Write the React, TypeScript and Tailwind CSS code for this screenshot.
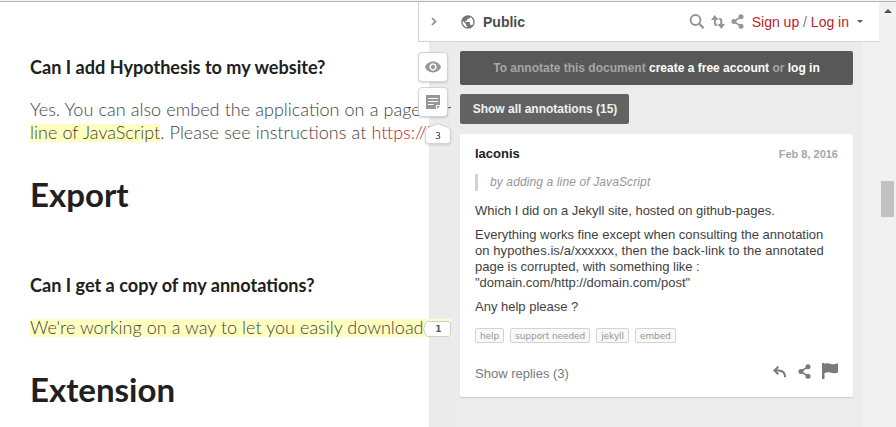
import React from "react";

const Chevron = () => (
  <svg width="6" height="9" viewBox="0 0 6 9" fill="none" stroke="#8b8b8b" strokeWidth="1.7">
    <path d="M1 1l3.5 3.5L1 8" />
  </svg>
);

const Globe = () => (
  <svg width="14" height="14" viewBox="1.500 1.500 21 21" fill="#757575">
    <path d="M12 2C6.48 2 2 6.48 2 12s4.48 10 10 10 10-4.48 10-10S17.52 2 12 2zm-1 17.93c-3.95-.49-7-3.85-7-7.93 0-.62.08-1.21.21-1.79L9 15v1c0 1.100.9 2 2 2v1.930zm6.900-2.540c-.26-.81-1-1.390-1.900-1.390h-1v-3c0-.55-.45-1-1-1H8v-2h2c.55 0 1-.45 1-1V7h2c1.100 0 2-.9 2-2v-.41c2.930 1.190 5 4.060 5 7.410 0 2.080-.8 3.970-2.100 5.390z" />
  </svg>
);

const Search = () => (
  <svg width="16" height="16" viewBox="0 0 16 16" fill="none" stroke="#969696">
    <circle cx="6.500" cy="6" r="4.900" strokeWidth="2" />
    <path d="M10 9.500l4.600 4.600" strokeWidth="2.300" />
  </svg>
);

const Sort = () => (
  <svg width="14" height="14" viewBox="0 0 14 14" fill="#969696">
    <path d="M3.700 0L7.600 5H5V8.500L7 11H5.500Q3 11 3 8.500V5H0z" />
    <path d="M10.300 14L14 9H11.300V5.500Q11.300 3 8.800 3H7.200L9.200 5.500V9H6.600z" />
  </svg>
);

const Share = ({ color }: { color: string }) => (
  <svg width="13" height="15" viewBox="0 0 13 15" fill={color}>
    <path d="M10.200 2.600L2.800 7.500l7.400 4.900" fill="none" stroke={color} strokeWidth="1.700" />
    <circle cx="10" cy="2.700" r="2.500" />
    <circle cx="2.900" cy="7.500" r="2.500" />
    <circle cx="10" cy="12.300" r="2.500" />
  </svg>
);

const Eye = () => (
  <svg width="16" height="12" viewBox="1 4 22 16" fill="#969696">
    <path d="M12 4.500C7 4.500 2.730 7.610 1 12c1.730 4.390 6 7.500 11 7.500s9.270-3.110 11-7.500c-1.730-4.390-6-7.500-11-7.500zM12 17c-2.760 0-5-2.240-5-5s2.240-5 5-5 5 2.240 5 5-2.240 5-5 5zm0-8c-1.660 0-3 1.340-3 3s1.340 3 3 3 3-1.340 3-3-1.340-3-3-3z" />
  </svg>
);

const Note = () => (
  <svg width="14" height="14" viewBox="0 0 14 14">
    <path d="M0 0h14v10h-4V14H0z" fill="#969696" />
    <path d="M11 11H14L11 14z" fill="#969696" />
    <path d="M2 3.500h10M2 6.500h10M2 9.500h5.500" stroke="#fff" strokeWidth="1.200" />
  </svg>
);

const Reply = () => (
  <svg width="14" height="12" viewBox="0 0 14 12" fill="none" stroke="#7a7a7a" strokeWidth="2">
    <path d="M5.300 .8L1.500 4.500 5.300 8.200" />
    <path d="M1.500 4.500H5.500Q12 4.800 12.200 11.300" />
  </svg>
);

const Flag = () => (
  <svg width="16" height="16" viewBox="0 0 16 16" fill="#7a7a7a">
    <path d="M0 0h2v.7C5-.1 7 .2 9 .9c2 .6 4 .4 7-.7v9.200c-3 1.200-5 1-7 .4-2-.6-4-.6-6.500.2V16H0z" />
  </svg>
);

const Question = ({ children }: { children: React.ReactNode }) => (
  <h3 className="h-[24px] whitespace-nowrap text-[18.1px] font-bold leading-[24px] text-[#202020]">{children}</h3>
);

const Tag = ({ children }: { children: React.ReactNode }) => (
  <span className="flex h-[15px] items-center rounded-[2px] border border-[#d3d3d3] bg-[#f9f9f9] px-[4px] font-['DejaVu_Sans',sans-serif] text-[9px] tracking-[-0.08px] text-[#969696]">
    {children}
  </span>
);

const toolButton =
  "flex h-[30px] w-[30px] items-center justify-center rounded-[4px] border border-[#d3d3d3] bg-white shadow-[0_1px_2px_rgba(0,0,0,0.15)]";

export default function App() {
  return (
    <div className="flex h-[427px] w-[896px] flex-col overflow-hidden bg-white font-['Liberation_Sans',Arial,sans-serif]">
      <div className="h-[2px] shrink-0 border-b border-[#b5b5b5] bg-[#f2f2f2]" />
      <div className="flex min-h-0 flex-1">
        <main className="relative w-[451px] shrink-0">
          <div className="absolute inset-y-0 right-0 w-[22px] bg-[#ebebeb]" />
          <article className="relative h-full overflow-hidden pl-[30px] pt-[53px] font-[Lato,sans-serif]">
            <Question>Can I add Hypothesis to my website?</Question>
            <p className="mt-[19px] whitespace-nowrap text-[18px] font-light leading-[23px] text-[#3f3f3f] [word-spacing:0.3px]">
              Yes. You can also embed the application on a page <span className="ml-[3px]">for</span>
              <br />
              <span className="bg-[linear-gradient(#ffffc0,#ffffc0)] bg-[length:100%_18px] bg-[position:0_3px] bg-no-repeat">line of JavaScript</span>. Please see instructions at <span className="text-[#bd1c2b]">https://h</span>
            </p>
            <h1 className="mt-[30px] text-[33px] font-bold leading-[40px] text-[#202020]">Export</h1>
            <div className="mt-[59px]">
              <Question>Can I get a copy of my annotations?</Question>
            </div>
            <p className="mt-[19px] whitespace-nowrap text-[18px] font-light leading-[23px] text-[#3f3f3f] [word-spacing:0.15px]">
              <span className="bg-[linear-gradient(#ffffc0,#ffffc0)] bg-[length:100%_18px] bg-[position:0_3px] bg-no-repeat pr-[30px]">We're working on a way to let you easily download</span>
            </p>
            <h1 className="mt-[30px] text-[33px] font-bold leading-[40px] text-[#202020]">Extension</h1>
          </article>
          <div className="absolute right-0 top-0 flex h-[40px] w-[33px] items-center border-b border-l border-[#d3d3d3] bg-white pl-[12px]">
            <Chevron />
          </div>
          <div className="absolute left-[418px] top-[50px] flex flex-col gap-[5px]">
            <button className={toolButton}><Eye /></button>
            <button className={toolButton}><Note /></button>
          </div>
          <div className="absolute left-[425px] top-[121px] h-[22px] w-[26px] drop-shadow-[0_1px_1px_rgba(0,0,0,0.15)]">
            <svg className="absolute inset-0" width="26" height="22" viewBox="0 0 26 22">
              <path d="M3 4.500L13 .7 23 4.500Q25.500 5.500 25.500 8v9.500q0 3-3 3H3.500q-3 0-3-3V8Q.5 5.500 3 4.500z" fill="#fff" stroke="#d3d3d3" />
            </svg>
            <span className="absolute inset-0 pt-[5px] text-center font-['DejaVu_Sans',sans-serif] text-[9.500px] leading-[15px] text-[#3f3f3f]">3</span>
          </div>
          <div className="absolute left-[423px] top-[319px] h-[16px] w-[28px]">
            <svg className="absolute inset-0" width="28" height="16" viewBox="0 0 28 16">
              <path d="M4.500.5H25q2.500 0 2.500 2.500v10q0 2.500-2.500 2.500H4.500Q3 15.500 2 12L.5 8 2 4Q3 .5 4.500.5z" fill="#fff" stroke="#cfcfcf" />
            </svg>
            <span className="absolute inset-0 pl-[3px] text-center font-['DejaVu_Sans',sans-serif] text-[9px] font-bold leading-[16px] text-[#5a5a5a]">1</span>
          </div>
        </main>

        <aside className="flex w-[428px] shrink-0 flex-col bg-[#f0f0f0]">
          <header className="flex h-[40px] items-center border-b border-[#d3d3d3] bg-white pl-[10px] pr-[16px]">
            <Globe />
            <span className="ml-[8px] pt-px text-[14px] font-bold text-[#4c4c4c]">Public</span>
            <div className="ml-auto flex items-center">
              <Search />
              <span className="ml-[6px]"><Sort /></span>
              <span className="ml-[6px]"><Share color="#969696" /></span>
              <span className="ml-[8px] whitespace-nowrap pt-px text-[14px] text-[#7a7a7a]">
                <a className="text-[#bd1c2b]">Sign up</a> / <a className="text-[#bd1c2b]">Log in</a>
              </span>
              <span className="ml-[8px] border-x-[3px] border-t-[3px] border-x-transparent border-t-[#5a5a5a]" />
            </div>
          </header>
          <div className="flex w-[411px] flex-1 flex-col items-start bg-[#ececec] pl-[9px] pt-[9px]">
            <div className="h-[34px] w-[393px] rounded-[2px] bg-[#585858] text-center text-[12px] font-bold leading-[34px] text-[#a6a6a6]">
              To annotate this document <a className="text-white">create a free account</a> or <a className="text-white">log in</a>
            </div>
            <button className="mt-[9px] h-[30px] w-[169px] rounded-[2px] bg-[#626262] pl-px text-[12px] font-bold text-[#f1f1f1]">
              Show all annotations (15)
            </button>
            <section className="mt-[10px] h-[263px] w-[393px] rounded-[2px] bg-white px-[15px] pt-[12px] text-[13px] leading-[16px] text-[#3f3f3f] shadow-[0_1px_1px_rgba(0,0,0,0.15)]">
              <div className="flex items-center justify-between">
                <b className="text-[#202020]">laconis</b>
                <span className="text-[11px] font-bold text-[#a6a6a6]">Feb 8, 2016</span>
              </div>
              <blockquote className="mt-[12px] h-[17px] border-l-[3px] border-[#d3d3d3] pl-[12px] text-[12px] italic leading-[16px] tracking-[0.12px] text-[#969696]">
                by adding a line of JavaScript
              </blockquote>
              <p className="mt-[12px]">Which I did on a Jekyll site, hosted on github-pages.</p>
              <p className="mt-[8px] whitespace-nowrap">
                Everything works fine except when consulting the annotation
                <br />
                <span className="tracking-[0.08px]">on hypothes.is/a/xxxxxx, then the back-link to the annotated</span>
                <br />page is corrupted, with something like :
                <br />"domain.com/http://domain.com/post"
              </p>
              <p className="mt-[8px]">Any help please ?</p>
              <div className="mt-[13px] flex gap-[6px]">
                <Tag>help</Tag>
                <Tag>support needed</Tag>
                <Tag>jekyll</Tag>
                <Tag>embed</Tag>
              </div>
              <footer className="mt-[19px] flex h-[18px] items-center">
                <span className="pt-[5px] text-[#7a7a7a]">Show replies (3)</span>
                <div className="ml-auto flex items-center">
                  <span className="pt-[2px]"><Reply /></span>
                  <span className="ml-[11px] pt-px"><Share color="#7a7a7a" /></span>
                  <span className="ml-[11px]"><Flag /></span>
                </div>
              </footer>
            </section>
          </div>
        </aside>

        <div className="flex w-[17px] shrink-0 flex-col items-center bg-[#f1f1f1]">
          <span className="mt-[7px] border-x-[4px] border-b-[4px] border-x-transparent border-b-[#505050]" />
          <div className="mt-[168px] h-[36px] w-[13px] bg-[#c1c1c1]" />
        </div>
      </div>
    </div>
  );
}
